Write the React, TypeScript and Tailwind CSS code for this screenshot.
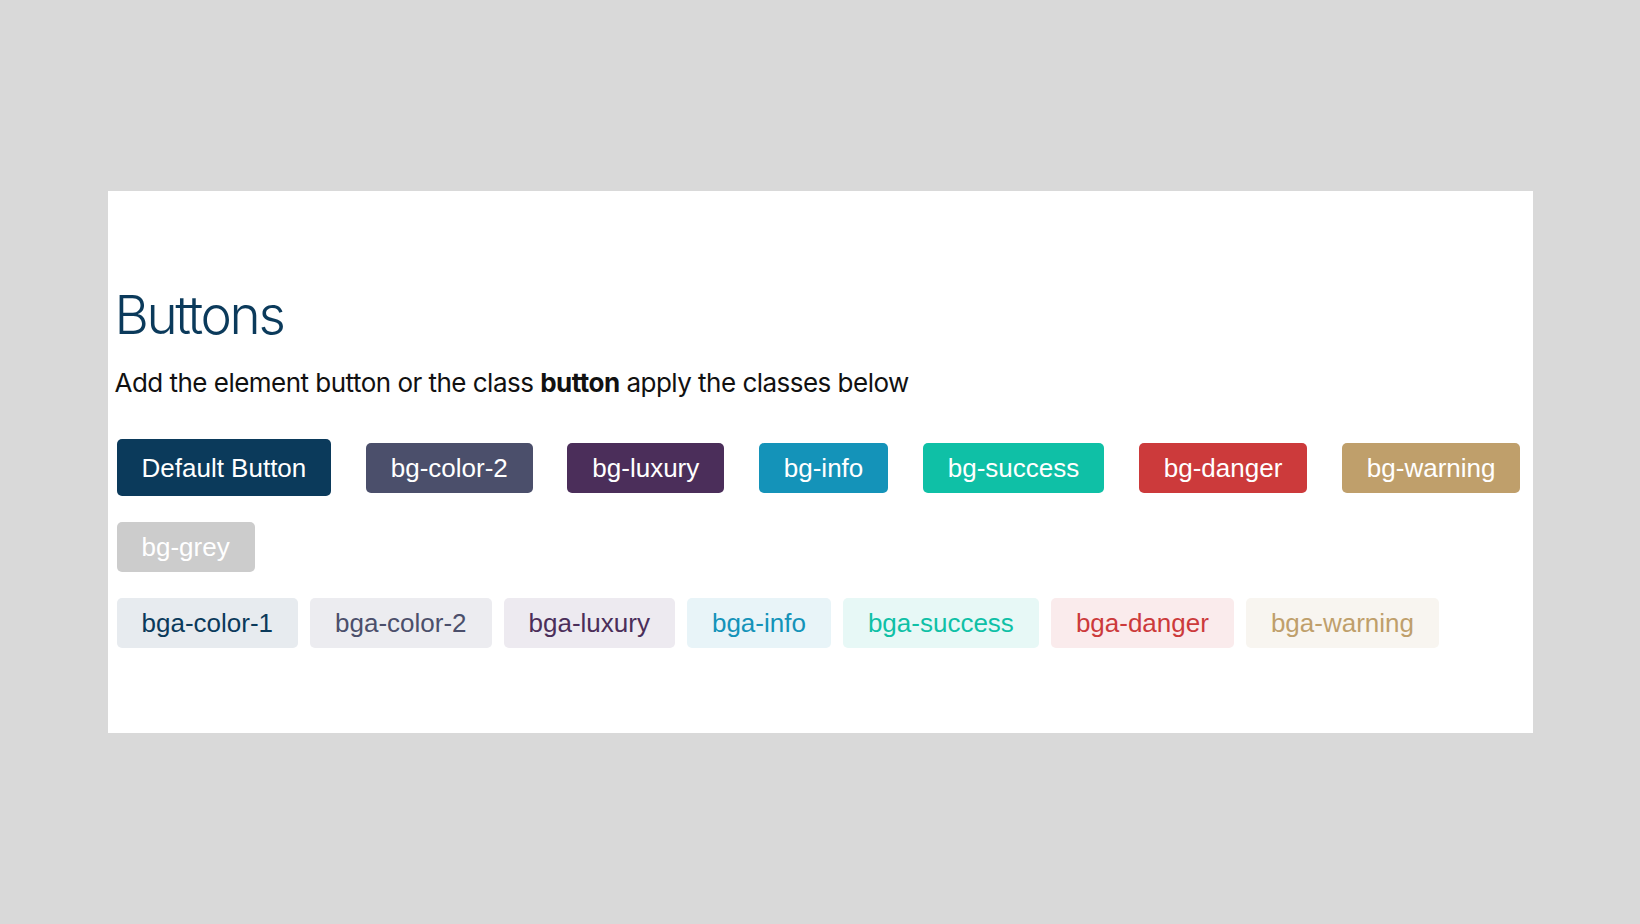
import React from 'react';

const solid = [
  { label: 'bg-color-2', cls: 'bg-[#4b4f6b]' },
  { label: 'bg-luxury', cls: 'bg-[#4b2e5a]' },
  { label: 'bg-info', cls: 'bg-[#1493b9]' },
  { label: 'bg-success', cls: 'bg-[#0fc0a6]' },
  { label: 'bg-danger', cls: 'bg-[#cc3a3b]' },
  { label: 'bg-warning', cls: 'bg-[#bf9f6b]' },
];

const alpha = [
  { label: 'bga-color-1', cls: 'bg-[#e7ebef] text-[#0b3a5b]' },
  { label: 'bga-color-2', cls: 'bg-[#ececf0] text-[#4b4f6b]' },
  { label: 'bga-luxury', cls: 'bg-[#edeaf0] text-[#4b2e5a]' },
  { label: 'bga-info', cls: 'bg-[#e8f4f8] text-[#1493b9]' },
  { label: 'bga-success', cls: 'bg-[#e7f8f6] text-[#0fc0a6]' },
  { label: 'bga-danger', cls: 'bg-[#faebec] text-[#cc3a3b]' },
  { label: 'bga-warning', cls: 'bg-[#f8f5f0] text-[#bf9f6b]' },
];

const btn = "h-[50px] px-[25px] rounded-[5px] text-[26px] leading-none font-['Liberation_Sans',Arial,sans-serif]";

export default function App() {
  return (
    <div className="min-h-[924px] bg-[#d9d9d9] pt-[191px]">
      <section className="mx-auto w-[1425px] bg-white pl-[9px] pt-[98px] pb-[85px]">
        <h1 className="font-['Inter',sans-serif] text-[53px] font-light leading-none tracking-[-0.045em] text-[#0b3a5b] -ml-[2px]">
          Buttons
        </h1>
        <p className="mt-[28px] font-['Inter',sans-serif] text-[26px] leading-none tracking-[-0.02em] text-[#111] -ml-[2px]">
          Add the element button or the class <b className="font-bold">button</b> apply the classes below
        </p>

        <div className="mt-[43px] flex items-center gap-x-[34.5px]">
          <button className={`${btn} h-[57px] bg-[#0b3a5b] text-white`}>Default Button</button>
          {solid.map((b) => (
            <button key={b.label} className={`${btn} ${b.cls} text-white`}>
              {b.label}
            </button>
          ))}
        </div>

        <div className="mt-[26px] flex">
          <button className={`${btn} bg-[#cccccc] text-white`}>bg-grey</button>
        </div>

        <div className="mt-[26px] flex gap-x-[12px]">
          {alpha.map((b) => (
            <button key={b.label} className={`${btn} ${b.cls}`}>
              {b.label}
            </button>
          ))}
        </div>
      </section>
    </div>
  );
}
